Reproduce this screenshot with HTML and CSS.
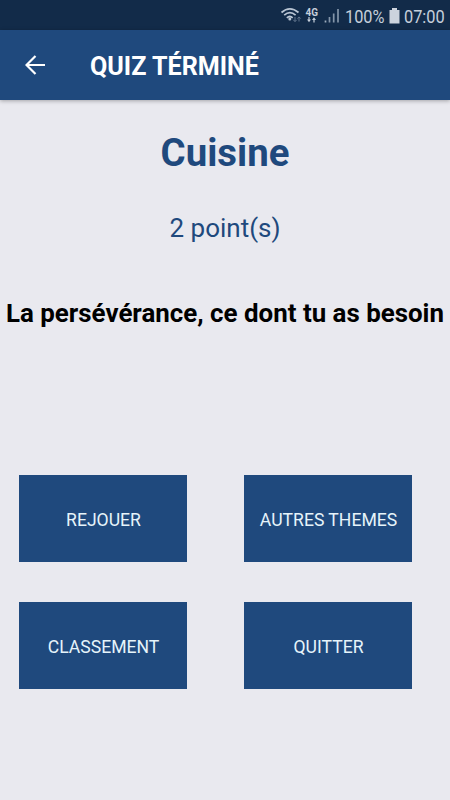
FILE: index.html
```html
<!DOCTYPE html>
<html lang="fr">
<head>
    <meta charset="UTF-8">
    <title>Quiz términé</title>
    <link rel="stylesheet" href="styles.css">
</head>
<body>
    <div class="status-bar">
        <svg class="status-icons" width="65" height="30" viewBox="0 0 65 30">
            <!-- wifi -->
            <g fill="none" stroke="#b9c5d3" stroke-width="1.7">
                <path d="M1.5 12.5 Q9.8 5.2 18.5 12.5"/>
                <path d="M4.2 15.2 Q9.9 10.2 15.6 15.2"/>
                <path d="M6.8 17.8 Q9.8 15.2 12.7 17.8"/>
            </g>
            <circle cx="9.8" cy="19" r="1.5" fill="#b9c5d3"/>
            <path d="M15 17v4.5M13.3 19.8l1.7 1.8 1.7-1.8M19 21.5V17M17.3 18.6l1.7-1.7 1.7 1.7" fill="none" stroke="#60758d" stroke-width="1"/>
            <!-- 4G -->
            <text class="network" x="25.5" y="15.5" textLength="12.5" lengthAdjust="spacingAndGlyphs">4G</text>
            <path d="M29 17v3M34 19v3.5" stroke="#c5cfdb" stroke-width="1.2"/>
            <path d="M27 19.5h4l-2 2.8zM32 20h4l-2-2.8z" fill="#c5cfdb"/>
            <!-- signal -->
            <path d="M45.5 20.5v2" stroke="#9dacbd" stroke-width="1.7"/>
            <path d="M49.5 17v5.5M53.7 13.5v9M58 9v13.5" stroke="#8395a9" stroke-width="1.7"/>
        </svg>
        <span class="battery-level">100%</span>
        <svg class="battery" width="11" height="16" viewBox="0 0 11 16">
            <path d="M3 0h5v2h2.5v13.5h-10V2H3z" fill="#ccd3dd"/>
        </svg>
        <span class="clock">07:00</span>
    </div>

    <div class="app-bar">
        <svg class="back" width="20" height="20" viewBox="0 0 20 20">
            <path d="M20 10H2M10.5 1L1.5 10l9 9" fill="none" stroke="#fff" stroke-width="2.2"/>
        </svg>
        <span class="title">QUIZ TÉRMINÉ</span>
    </div>

    <div class="content">
        <h1 class="theme">Cuisine</h1>
        <p class="score">2 point(s)</p>
        <p class="message">La persévérance, ce dont tu as besoin</p>

        <div class="actions">
            <button class="btn" type="button">REJOUER</button>
            <button class="btn" type="button">AUTRES THEMES</button>
            <button class="btn" type="button">CLASSEMENT</button>
            <button class="btn" type="button">QUITTER</button>
        </div>
    </div>
</body>
</html>
```
FILE: styles.css
```css
body {
    margin: 0;
    height: 800px;
    overflow: hidden;
    background-color: #e9e9ef;
    font-family: Roboto, sans-serif;
}

.status-bar {
    display: flex;
    height: 30px;
    box-sizing: border-box;
    padding-left: 280px;
    background-color: #122b49;
    color: #c5cfdb;
    font-size: 19px;
    line-height: 33px;
    white-space: nowrap;
}

.status-icons {
    flex: none;
}

.network {
    font-size: 10px;
    font-weight: bold;
    fill: #c5cfdb;
}

.battery-level,
.clock {
    flex: none;
    transform: scaleX(0.86);
    transform-origin: left;
}

.battery-level {
    width: 44px;
}

.battery {
    flex: none;
    margin: 8px 4px 0 0;
}

.app-bar {
    position: relative;
    display: flex;
    align-items: center;
    height: 70px;
    box-sizing: border-box;
    padding-left: 25px;
    background-color: #1f497d;
    box-shadow: 0 1px 4px rgba(0, 0, 0, 0.3);
}

.title {
    margin: 3px 0 0 45px;
    color: #fff;
    font-size: 25.1px;
    font-weight: bold;
    white-space: nowrap;
}

.content {
    text-align: center;
}

.theme {
    margin: 0;
    padding-top: 30px;
    color: #1f497d;
    font-size: 38.4px;
    line-height: 46px;
}

.score {
    margin: 36px 0 0;
    color: #1f497d;
    font-size: 26px;
    line-height: 32px;
}

.message {
    margin: 53px 0 0;
    color: #000;
    font-size: 25.9px;
    font-weight: bold;
    line-height: 32px;
    white-space: nowrap;
}

.actions {
    display: grid;
    grid-template-columns: 168px 168px;
    grid-auto-rows: 87px;
    gap: 40px 57px;
    margin: 146px 0 0 19px;
}

.btn {
    padding: 2px 0 0 1px;
    border: none;
    background-color: #1f497d;
    color: #e6f4fa;
    font-family: inherit;
    font-size: 17.6px;
}
```
